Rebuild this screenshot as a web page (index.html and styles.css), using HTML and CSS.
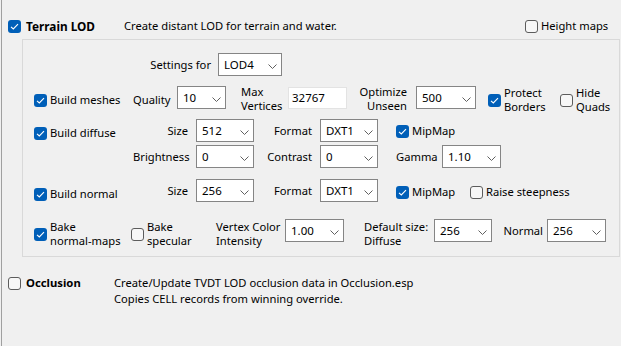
FILE: index.html
```html
<!DOCTYPE html>
<html>
<head>
<meta charset="utf-8">
<link rel="stylesheet" href="styles.css">
</head>
<body>
<div class="window">
  <div class="header">
    <div class="lead">
      <span class="cb on"><svg viewBox="0 0 13 13"><path d="M3 6.8 L5.3 9 L10 4.2"/></svg></span>
      <span class="title">Terrain LOD</span>
    </div>
    <div class="desc">Create distant LOD for terrain and water.</div>
    <div class="chk hmaps"><span class="cb"></span><span>Height maps</span></div>
  </div>

  <div class="panel">
    <div class="row">
      <div class="lbl set-lbl">Settings for</div>
      <div class="combo w64"><span>LOD4</span><svg viewBox="0 0 9 5"><path d="M0.5 0.5 L4.5 4.5 L8.5 0.5"/></svg></div>
    </div>

    <div class="row r2">
      <div class="chk first d6"><span class="cb on"><svg viewBox="0 0 13 13"><path d="M3 6.8 L5.3 9 L10 4.2"/></svg></span><span>Build meshes</span></div>
      <div class="lbl q-lbl d2">Quality</div>
      <div class="combo w49"><span>10</span><svg viewBox="0 0 9 5"><path d="M0.5 0.5 L4.5 4.5 L8.5 0.5"/></svg></div>
      <div class="ml mv-lbl">Max<br>Vertices</div>
      <div class="edit">32767</div>
      <div class="ml opt-lbl">Optimize<br>Unseen</div>
      <div class="combo w60"><span>500</span><svg viewBox="0 0 9 5"><path d="M0.5 0.5 L4.5 4.5 L8.5 0.5"/></svg></div>
      <div class="chk pb"><span class="cb on"><svg viewBox="0 0 13 13"><path d="M3 6.8 L5.3 9 L10 4.2"/></svg></span><span class="ml2">Protect<br>Borders</span></div>
      <div class="chk"><span class="cb"></span><span class="ml2">Hide<br>Quads</span></div>
    </div>

    <div class="row r3">
      <div class="chk first d6"><span class="cb on"><svg viewBox="0 0 13 13"><path d="M3 6.8 L5.3 9 L10 4.2"/></svg></span><span>Build diffuse</span></div>
      <div class="lbl la">Size</div>
      <div class="combo w58"><span>512</span><svg viewBox="0 0 9 5"><path d="M0.5 0.5 L4.5 4.5 L8.5 0.5"/></svg></div>
      <div class="lbl lb">Format</div>
      <div class="combo w58"><span>DXT1</span><svg viewBox="0 0 9 5"><path d="M0.5 0.5 L4.5 4.5 L8.5 0.5"/></svg></div>
      <div class="chk mip d4"><span class="cb on"><svg viewBox="0 0 13 13"><path d="M3 6.8 L5.3 9 L10 4.2"/></svg></span><span>MipMap</span></div>
    </div>

    <div class="row r4">
      <div class="first"></div>
      <div class="lbl la">Brightness</div>
      <div class="combo w58"><span>0</span><svg viewBox="0 0 9 5"><path d="M0.5 0.5 L4.5 4.5 L8.5 0.5"/></svg></div>
      <div class="lbl lb">Contrast</div>
      <div class="combo w58"><span>0</span><svg viewBox="0 0 9 5"><path d="M0.5 0.5 L4.5 4.5 L8.5 0.5"/></svg></div>
      <div class="lbl gamma">Gamma</div>
      <div class="combo w59"><span>1.10</span><svg viewBox="0 0 9 5"><path d="M0.5 0.5 L4.5 4.5 L8.5 0.5"/></svg></div>
    </div>

    <div class="row r5">
      <div class="chk first d7"><span class="cb on"><svg viewBox="0 0 13 13"><path d="M3 6.8 L5.3 9 L10 4.2"/></svg></span><span>Build normal</span></div>
      <div class="lbl la">Size</div>
      <div class="combo w58"><span>256</span><svg viewBox="0 0 9 5"><path d="M0.5 0.5 L4.5 4.5 L8.5 0.5"/></svg></div>
      <div class="lbl lb">Format</div>
      <div class="combo w58"><span>DXT1</span><svg viewBox="0 0 9 5"><path d="M0.5 0.5 L4.5 4.5 L8.5 0.5"/></svg></div>
      <div class="chk mip d5"><span class="cb on"><svg viewBox="0 0 13 13"><path d="M3 6.8 L5.3 9 L10 4.2"/></svg></span><span>MipMap</span></div>
      <div class="chk d5"><span class="cb"></span><span>Raise steepness</span></div>
    </div>

    <div class="row r6">
      <div class="chk bnm d1"><span class="cb on"><svg viewBox="0 0 13 13"><path d="M3 6.8 L5.3 9 L10 4.2"/></svg></span><span class="ml2">Bake<br>normal-maps</span></div>
      <div class="chk bsp d1"><span class="cb"></span><span class="ml2">Bake<br>specular</span></div>
      <div class="ml vci-lbl d1">Vertex Color<br>Intensity</div>
      <div class="combo w59"><span>1.00</span><svg viewBox="0 0 9 5"><path d="M0.5 0.5 L4.5 4.5 L8.5 0.5"/></svg></div>
      <div class="ml ds-lbl d1">Default size:<br>Diffuse</div>
      <div class="combo w58"><span>256</span><svg viewBox="0 0 9 5"><path d="M0.5 0.5 L4.5 4.5 L8.5 0.5"/></svg></div>
      <div class="lbl n-lbl">Normal</div>
      <div class="combo w59"><span>256</span><svg viewBox="0 0 9 5"><path d="M0.5 0.5 L4.5 4.5 L8.5 0.5"/></svg></div>
    </div>
  </div>

  <div class="occl">
    <div class="lead occ-lead">
      <span class="cb"></span>
      <span class="title">Occlusion</span>
    </div>
    <div class="occ-desc">Create/Update TVDT LOD occlusion data in Occlusion.esp<br>Copies CELL records from winning override.</div>
  </div>
</div>
</body>
</html>
```
FILE: styles.css
```css
* { box-sizing: border-box; }
html, body { margin: 0; padding: 0; }
body {
  background: #f0f0f0;
  font-family: "Noto Sans", "Open Sans", sans-serif;
  font-size: 11.2px;
  color: #000;
  width: 621px;
  height: 346px;
  overflow: hidden;
}
.window {
  margin-left: 1px;
  border-left: 1px solid #a0a0a0;
  height: 346px;
  padding-top: 18px;
}
.header {
  display: flex;
  align-items: center;
  height: 16px;
  line-height: 16px;
  padding-left: 6px;
}
.lead {
  display: flex;
  align-items: center;
  width: 116px;
  flex: none;
}
.lead .cb { margin-right: 5px; }
.title { font-weight: bold; font-size: 11.8px; }
.occ-lead .title { font-size: 11.3px; }
.desc { flex: 1; white-space: nowrap; }
.hmaps { width: 96px; flex: none; }

/* checkbox */
.cb {
  width: 13px;
  height: 13px;
  border-radius: 3px;
  border: 1px solid #5c5c5c;
  background: #f7f7f7;
  flex: none;
  display: block;
}
.cb.on {
  border: none;
  background: #005fb8;
}
.cb svg { width: 13px; height: 13px; display: block; }
.cb svg path { fill: none; stroke: #fff; stroke-width: 1.1; }

.chk {
  display: flex;
  align-items: center;
  line-height: 16px;
  white-space: nowrap;
}
.chk .cb { margin-right: 3px; }
.ml2 { line-height: 14px; }

/* panel */
.panel {
  margin-left: 20px;
  margin-top: 5px;
  width: 598px;
  border: 1px solid #d9d9d9;
  padding: 13px 0 14px 11px;
}
.row {
  display: flex;
  align-items: flex-start;
  height: 23px;
  white-space: nowrap;
}
.r2 { margin-top: 10px; }
.r3 { margin-top: 10px; }
.r4 { margin-top: 3px; }
.r5 { margin-top: 11px; }
.r6 { margin-top: 17px; }

.lbl { line-height: 23px; flex: none; }
.ml { line-height: 14px; flex: none; }

.d1 { margin-top: 1px; }
.d2 { margin-top: 2px; }
.d4 { margin-top: 4px; }
.d5 { margin-top: 5px; }
.d6 { margin-top: 6px; }
.d7 { margin-top: 7px; }

.first { width: 99px; flex: none; }
.set-lbl { width: 177px; text-align: right; margin-right: 7px; }
.q-lbl { width: 37px; text-align: right; margin-right: 7px; }
.mv-lbl { width: 47px; margin-left: 15px; margin-top: -1px; }
.opt-lbl { width: 60px; text-align: right; margin-right: 9px; margin-top: -1px; }
.pb { margin-left: 12px; width: 72px; flex: none; }
.la { width: 55px; text-align: right; margin-right: 8px; }
.lb { width: 58px; text-align: right; margin-right: 8px; }
.mip { margin-left: 18px; width: 74px; flex: none; }
.gamma { margin-left: 18px; width: 46px; }
.bnm { width: 97px; flex: none; }
.bsp { width: 85px; flex: none; }
.vci-lbl { width: 69px; }
.ds-lbl { width: 70px; margin-left: 20px; }
.n-lbl { width: 55px; text-align: right; padding-right: 4px; }

/* combo */
.combo {
  flex: none;
  height: 23px;
  background: #fff;
  border: 1px solid #858585;
  display: flex;
  align-items: center;
  justify-content: space-between;
  padding: 0 4px 0 5px;
  line-height: 21px;
  font-size: 11.5px;
}
.combo svg {
  width: 9px;
  height: 5px;
  margin-top: 3px;
  display: block;
}
.combo svg path { fill: none; stroke: #606060; stroke-width: 1; }
.w49 { width: 49px; }
.w58 { width: 58px; }
.w59 { width: 59px; }
.w60 { width: 60px; }
.w64 { width: 64px; }

.edit {
  flex: none;
  width: 59px;
  height: 22px;
  margin-top: 1px;
  background: #fff;
  border: 1px solid #e3e3e3;
  padding-left: 3px;
  line-height: 20px;
  font-size: 11.5px;
}

/* occlusion */
.occl {
  display: flex;
  align-items: flex-start;
  margin-top: 18px;
  padding-left: 6px;
  line-height: 16px;
}
.occ-lead { width: 106px; }
.occ-lead .cb { margin-top: 2px; align-self: flex-start; }
.occ-desc { white-space: nowrap; }
```
